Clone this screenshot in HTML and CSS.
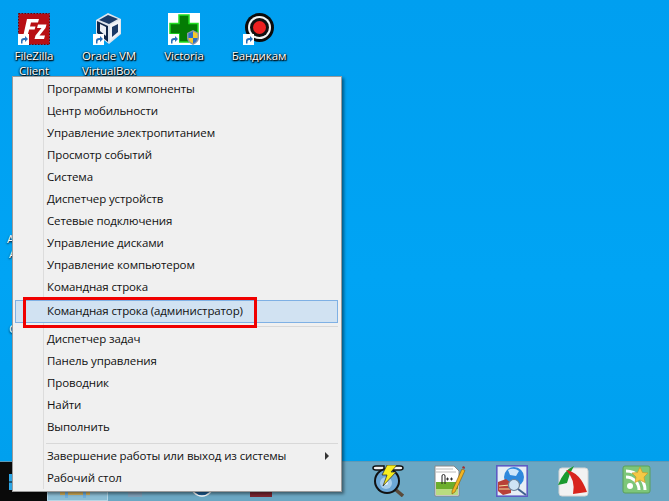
FILE: index.html
```html
<!DOCTYPE html>
<html lang="ru">
<head>
<meta charset="utf-8">
<title>Меню Windows</title>
<link rel="stylesheet" href="styles.css">
</head>
<body>
<svg class="defs" width="0" height="0">
  <symbol id="shortcut" viewBox="0 0 11 11">
    <rect width="11" height="11" fill="#fff"/>
    <path d="M3 9.5V6.5Q3 4 6 4H7V2L10 5L7 8V6H6Q4.5 6 4.5 7.5V9.5Z" fill="#2a6fb8"/>
  </symbol>
</svg>
<div class="desktop">
  <main class="wall">
    <div class="icons">
      <div class="icon">
        <svg class="glyph" viewBox="0 0 32 32">
          <rect x=".5" y=".5" width="31" height="31" fill="#b80f14" stroke="#6d0004" stroke-dasharray="1.5 1.5"/>
          <path d="M9 6H21L20 9.5H13L12 13.5H17.5L16.6 16.5H11.2L8.5 26H4.5Z" fill="#fff"/>
          <path d="M20 11.5H28.5L27.5 15L21.5 22.5H27L26 26H16.5L17.5 22.5L23.5 15H19Z" fill="#fff"/>
          <use href="#shortcut" x="0" y="21" width="11" height="11"/>
        </svg>
        <span class="label">FileZilla Client</span>
      </div>
      <div class="icon">
        <svg class="glyph" viewBox="0 0 32 32">
          <path d="M3 7L15 0L28 6V21L16 31L3 21Z" fill="#dfe6ee"/>
          <path d="M6 7L15 2L25 6L16 11Z" fill="#1c3a66"/>
          <path d="M4 8L15 13V29L4 20Z" fill="#0f2548"/>
          <path d="M17 12L27 7V20L17 28Z" fill="#f1f4f8"/>
          <path d="M19 14L25 11V19L19 24Z" fill="#1c3a66"/>
          <path d="M7 11L13 14V23L7 18Z" fill="#e8edf3"/>
          <use href="#shortcut" x="0" y="21" width="11" height="11"/>
        </svg>
        <span class="label">Oracle VM VirtualBox</span>
      </div>
      <div class="icon">
        <svg class="glyph" viewBox="0 0 32 32">
          <rect width="32" height="32" fill="#fff"/>
          <path d="M11 2H21V10.500H30V21H21V29H11V21H2V10.500H11Z" fill="#047c04" stroke="#22dd22" stroke-width="1.500"/>
          <path d="M19 20L25 17L31 20V25Q31 29 25 32Q19 29 19 25Z" fill="#8a97a6"/>
          <path d="M20.500 20.500L25 18.500V25H20.500Z" fill="#2a6fc8"/>
          <path d="M25 18.500L29.500 20.500V25H25Z" fill="#f4c82a"/>
          <path d="M20.500 25H25V30.500Q21 29 20.500 25Z" fill="#f4c82a"/>
          <path d="M25 25H29.500Q29 29 25 30.500Z" fill="#2a6fc8"/>
          <use href="#shortcut" x="0" y="21" width="11" height="11"/>
        </svg>
        <span class="label">Victoria</span>
      </div>
      <div class="icon">
        <svg class="glyph" viewBox="0 0 32 32">
          <circle cx="16.500" cy="14.500" r="14.500" fill="#0b0b0b"/>
          <circle cx="16.500" cy="14.500" r="11.500" fill="#f4f4f4"/>
          <circle cx="16.500" cy="14.500" r="9.500" fill="#111"/>
          <circle cx="16.500" cy="14.500" r="6.500" fill="#ee2020"/>
          <use href="#shortcut" x="0" y="21" width="11" height="11"/>
        </svg>
        <span class="label">Бандикам</span>
      </div>
    </div>
    <div class="hidden-labels">
      <span class="stub stub-a">Ad</span>
      <span class="stub stub-b">A</span>
      <span class="stub stub-c">C</span>
    </div>
  </main>

  <footer class="taskbar">
    <div class="start">
      <svg class="win" viewBox="0 0 16 18">
        <rect x="0" y="1" width="7" height="7.500" fill="#2fa8e8"/>
        <rect x="8" y="0" width="8" height="8.500" fill="#2fa8e8"/>
        <rect x="0" y="9.500" width="7" height="7.500" fill="#2fa8e8"/>
        <rect x="8" y="9.500" width="8" height="8.500" fill="#2fa8e8"/>
      </svg>
    </div>
    <div class="task-btn">
      <svg class="task-glyph" viewBox="0 0 32 32">
        <rect x="0" y="26" width="30" height="3" fill="#d9b35c"/>
        <rect x="5" y="24" width="3" height="8" fill="#6fb1e0"/>
        <rect x="23" y="24" width="3" height="8" fill="#6fb1e0"/>
      </svg>
    </div>
    <div class="under">
      <svg class="under-pin under-box" viewBox="0 0 14 32"><rect x="0" y="27" width="14" height="5" fill="#7f9fb8"/></svg>
      <svg class="under-pin under-disc" viewBox="0 0 24 32"><circle cx="12" cy="20" r="11" fill="#1f5f96" stroke="#fff" stroke-width="1.500"/></svg>
      <svg class="under-pin under-red" viewBox="0 0 22 32"><rect x="0" y="27" width="22" height="5" fill="#7a2530"/></svg>
    </div>
    <div class="pins">
      <svg class="pin" viewBox="0 0 32 32">
        <path d="M1 3Q1 1 4 1H12V5H4Q1 5 1 3ZM20 1H28Q31 1 31 3T28 5H20Z" fill="#f4f4f4" stroke="#111" stroke-width="1.500"/>
        <path d="M24 25L31 31" stroke="#5a4a3a" stroke-width="3.500"/>
        <circle cx="15" cy="16" r="13" fill="#111"/>
        <circle cx="15" cy="16" r="11" fill="#6ba7d6"/>
        <circle cx="14" cy="18" r="6" fill="#a9cfeb"/>
        <circle cx="14" cy="18" r="2" fill="#eaf4fb"/>
        <path d="M15 0H25L19 7H24L11 21L15 10H10Z" fill="#f8ee1e" stroke="#222" stroke-width=".7"/>
      </svg>
      <svg class="pin" viewBox="0 0 32 32">
        <path d="M1 1H20L25 6V31H1Z" fill="#fff" stroke="#888" stroke-width="1"/>
        <path d="M2 17H24V24H2Z" fill="#6cae2c"/>
        <path d="M2 24H24V30H2Z" fill="#b9dc80"/>
        <path d="M2 4H19M2 7H22" stroke="#bbb" stroke-width="1"/>
        <path d="M8 19V11Q8 9.500 9.500 9.500T11 11V19" fill="none" stroke="#222" stroke-width="1"/>
        <path d="M12 14H15M13.500 12.500V15.500M16 14H19M17.500 12.500V15.500" stroke="#222" stroke-width=".9"/>
        <path d="M18 26L28 4L31 5.500L21 27L18 29Z" fill="#f2b422" stroke="#7a5a10" stroke-width=".6"/>
        <path d="M28 3L29 1L31 2L30.500 4Z" fill="#a03030"/>
      </svg>
      <svg class="pin" viewBox="0 0 32 32">
        <rect x=".8" y=".8" width="30.400" height="30.400" fill="#e6eef6" stroke="#5d5cc4" stroke-width="1.600"/>
        <circle cx="18" cy="12" r="10" fill="#2e88dc"/>
        <path d="M12 5Q18 2 23 6L20 11L14 10Z" fill="#cfe6fa"/>
        <path d="M2 17L10 14L15 18V28L7 30L2 26Z" fill="#b84038"/>
        <path d="M3 21L14 20M3 24L14 24" stroke="#f3e0a0" stroke-width="1.200"/>
        <circle cx="18" cy="20" r="5.500" fill="#cfe4f5" stroke="#6d8296" stroke-width="1.200"/>
        <path d="M22 24L30 30" stroke="#41618f" stroke-width="2"/>
      </svg>
      <svg class="pin" viewBox="0 0 32 32">
        <rect x="1" y="3" width="29" height="28" rx="3" fill="#f2f2f2" stroke="#d4d4d4"/>
        <path d="M16 1Q6 5 0 20L9 18Q11 9 16 1Z" fill="#1a9a2e"/>
        <path d="M8 5Q22 7 29 27L15 29Q18 15 8 5Z" fill="#d8241c"/>
      </svg>
      <svg class="pin" viewBox="0 0 32 32">
        <rect x="3" y="1" width="27" height="27" rx="2" fill="#7dc67a" stroke="#5aa05a"/>
        <circle cx="10" cy="21" r="3" fill="#fff"/>
        <path d="M6 12A13 13 0 0 1 19 25M6 6A19 19 0 0 1 25 25" fill="none" stroke="#fff" stroke-width="3"/>
        <path d="M20 2L22.500 7.500L28 8L24 12L25 17.500L20 15L15 17.500L16 12L12 8L17.500 7.500Z" fill="#f6c945" stroke="#c79a2a" stroke-width=".7"/>
      </svg>
    </div>
  </footer>

  <nav class="menu">
    <ul class="group">
      <li class="item">Программы и компоненты</li>
      <li class="item">Центр мобильности</li>
      <li class="item">Управление электропитанием</li>
      <li class="item">Просмотр событий</li>
      <li class="item">Система</li>
      <li class="item">Диспетчер устройств</li>
      <li class="item">Сетевые подключения</li>
      <li class="item">Управление дисками</li>
      <li class="item">Управление компьютером</li>
      <li class="item">Командная строка</li>
      <li class="item item-active">Командная строка (администратор)</li>
    </ul>
    <ul class="group">
      <li class="item">Диспетчер задач</li>
      <li class="item">Панель управления</li>
      <li class="item">Проводник</li>
      <li class="item">Найти</li>
      <li class="item">Выполнить</li>
    </ul>
    <ul class="group">
      <li class="item item-sub">Завершение работы или выход из системы<span class="arrow"></span></li>
      <li class="item">Рабочий стол</li>
    </ul>
  </nav>

  <div class="highlight"></div>
</div>
</body>
</html>
```
FILE: styles.css
```css
* { box-sizing: border-box; }
html, body { margin: 0; padding: 0; }
body { width: 669px; height: 501px; overflow: hidden; font-family: "Open Sans", "Noto Sans", sans-serif; }
.defs { position: absolute; }
.desktop { position: relative; width: 669px; height: 501px; display: flex; flex-direction: column; overflow: hidden; }
.wall { flex: 1; position: relative; background: linear-gradient(180deg, #009ff0 0%, #00a4f4 60%, #00a0ee 100%); }
.icons { display: flex; gap: 7px; padding-top: 13px; }
.icon { width: 68px; display: flex; flex-direction: column; align-items: center; }
.glyph { width: 32px; height: 32px; display: block; }
.label { margin-top: 3px; font-size: 11.5px; letter-spacing: -.12px; line-height: 15px; color: #fff; text-align: center; text-shadow: 0 1px 2px #000, 0 0 2px #000, 1px 1px 1px #000; }
.stub { position: absolute; font-size: 11.5px; line-height: 13px; color: #fff; text-shadow: 0 1px 2px #000; }
.stub-a { left: 7px; top: 232px; }
.stub-b { left: 9px; top: 247px; }
.stub-c { left: 9px; top: 322px; }
.taskbar { height: 40px; display: flex; background: #6ba7c3; border-top: 1px solid #5f9ab6; }
.start { width: 47px; background: #0a0a0a; padding: 11px 0 0 9px; }
.win { width: 16px; height: 18px; display: block; }
.task-btn { width: 61px; background: #8bbdd4; border: 1px solid #b5d6e5; padding: 3px 0 0 12px; }
.task-glyph { width: 32px; height: 32px; display: block; }
.under { flex: 1; display: flex; padding-left: 20px; }
.under-pin { height: 32px; display: block; margin-top: 3px; }
.under-box { width: 14px; }
.under-disc { width: 24px; margin-left: 48px; }
.under-red { width: 22px; margin-left: 36px; }
.pins { display: flex; gap: 30px; padding: 3px 17px 0 0; }
.pin { width: 32px; height: 32px; display: block; }
.menu { position: absolute; left: 12px; top: 76px; width: 330px; height: 416px; padding: 3px; background: #f0f0f0; border: 1px solid #9a9a9a; box-shadow: 2px 2px 3px rgba(0,0,0,.45); }
.menu::before { content: ""; position: absolute; left: 30px; top: 2px; bottom: 2px; width: 1px; background: #dcdcdc; }
.group { list-style: none; margin: 0; padding: 0; position: relative; }
.group + .group { margin-top: 3px; padding-top: 5px; }
.group + .group::before { content: ""; position: absolute; left: 30px; right: 0; top: 1px; height: 1px; background: #d8d8d8; }
.group:last-child { margin-top: 2px; }
.item { height: 22px; line-height: 18px; padding-left: 31px; font-size: 11.5px; letter-spacing: -.12px; color: #101010; position: relative; white-space: nowrap; }
.item-active { background: #d1e2f2; border: 1px solid #7fb0e4; margin-left: -1px; padding-left: 31px; line-height: 19px; height: 23px; margin-bottom: -1px; }
.arrow { position: absolute; right: 9px; top: 5px; border-left: 4px solid #333; border-top: 4px solid transparent; border-bottom: 4px solid transparent; }
.highlight { position: absolute; left: 23px; top: 297px; width: 234px; height: 31px; border: 3px solid #f00000; }
```
